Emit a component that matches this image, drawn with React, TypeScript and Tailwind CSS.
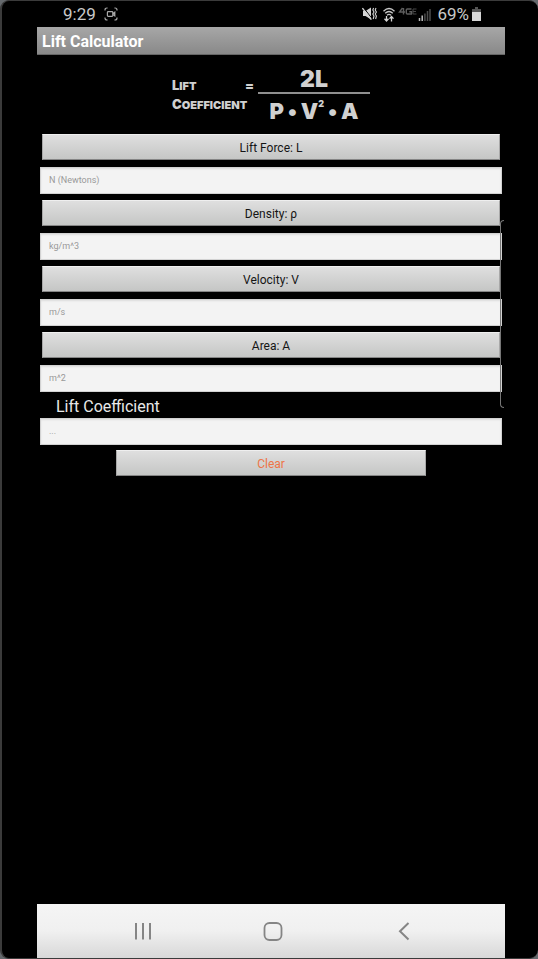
import { useState } from "react";

const fields = [
  { id: "force", label: "Lift Force: L", hint: "N (Newtons)" },
  { id: "density", label: "Density: ρ", hint: "kg/m^3" },
  { id: "velocity", label: "Velocity: V", hint: "m/s" },
  { id: "area", label: "Area: A", hint: "m^2" },
];

const buttonStyle =
  "block h-[26px] border border-t-[#efefef] border-x-[#a8a8a8] border-b-[#858585] bg-linear-to-b from-[#dfdfdf] to-[#c5c6c5] pt-[2px] text-[12px] leading-none";
const inputStyle =
  "block h-[27px] w-full border border-[#d2d2d2] bg-[#f3f3f3] px-2 pb-[2px] text-[9px] leading-none text-[#555] shadow-[inset_0_1px_2px_#dcdcdc] outline-none placeholder:text-[#999]";

function StatusBar() {
  return (
    <div className="flex h-[26px] items-center justify-between pr-[24px] pl-[26px] text-[17px] leading-none text-[#c9c9c9]">
      <div className="flex items-center gap-2">
        <span>9:29</span>
        <svg width="14" height="14" viewBox="0 0 14 14" fill="none" stroke="#a8a8a8" strokeWidth="1.2">
          <path d="M1 3.6V3Q1 1 3 1H3.6M10.4 1H11Q13 1 13 3V3.6M13 10.4V11Q13 13 11 13H10.4M3.6 13H3Q1 13 1 11V10.4" />
          <rect x="3.4" y="4.6" width="5.4" height="4.8" rx="0.8" />
          <path d="M8.8 6.5L10.8 5.2V8.8L8.8 7.5" />
        </svg>
      </div>
      <div className="flex items-center gap-[3px]">
        <svg width="72" height="18" viewBox="3 0 72 18" fill="none">
          <path d="M4 6H6.5L12 2.5V14.5L6.5 11H4Z" fill="#d5d5d5" />
          <path d="M4.4 2.4L13 13.6" stroke="#000" strokeWidth="1" />
          <path d="M3.4 3.2L12.4 14.6" stroke="#d5d5d5" strokeWidth="1.4" />
          <path d="M14.6 3L13.8 5L15 7L13.8 9L15 11L14.2 14M17 3L16.2 5L17.4 7L16.2 9L17.4 11L16.6 14" stroke="#d5d5d5" strokeWidth="1.1" />
          <path d="M24.5 6.2Q30 0.8 35.5 6.2M26.2 8.3Q30 4.8 33.8 8.3M28 10.3Q30 8.4 32 10.3" stroke="#c8c8c8" strokeWidth="1.3" />
          <path d="M27.5 11V16M25.5 13.8L27.5 16L29.5 13.8M32.5 16.5V11.5M30.5 13.6L32.5 11.5L34.5 13.6" stroke="#d5d5d5" strokeWidth="1.3" />
          <path d="M43.5 3L40.5 7H46M44.5 3V9.5M52.5 4H48.3Q47.3 4 47.3 5V8Q47.3 9 48.3 9H52.5V6.8H50.3" stroke="#5d5d5d" strokeWidth="1.4" />
          <path d="M57.5 4H54V9H57.5M54 6.5H57" stroke="#484848" strokeWidth="1" />
          <path d="M60.5 13V16M63.2 10.5V16" stroke="#bdbdbd" strokeWidth="1.5" />
          <path d="M65.9 8.5V16M68.5 6V16M71 4V16" stroke="#4c4c4c" strokeWidth="1.5" />
        </svg>
        <span>69%</span>
        <svg width="9" height="14" viewBox="0 0 9 14">
          <path d="M3 0H6V2H9V14H0V2H3Z" fill="#555" />
          <path d="M0 5H9V14H0Z" fill="#d6d6d6" />
        </svg>
      </div>
    </div>
  );
}

function Formula() {
  return (
    <div className="flex h-[79px] justify-center pt-[11px] font-['Inter','Open_Sans',sans-serif] font-black text-[#d0d0d0]">
      <div className="flex w-[86px] flex-col pt-[10px] text-[13px] leading-[18px]">
        <div className="flex justify-between pr-1">
          <span>
            L<span className="text-[11px]">IFT</span>
          </span>
          <span>=</span>
        </div>
        <span>
          C<span className="text-[11px]">OEFFICIENT</span>
        </span>
      </div>
      <div className="flex w-[112px] flex-col items-center text-[23px] leading-[26px]">
        <div className="h-[28px] w-full border-b-2 border-[#8f8f8f] text-center">2L</div>
        <div className="flex items-start gap-[4px] pt-[4px] text-[22px]">
          <span>P</span>
          <span>•</span>
          <span className="flex">
            V<sup className="top-0 text-[9px] leading-[12px]">2</sup>
          </span>
          <span>•</span>
          <span>A</span>
        </div>
      </div>
    </div>
  );
}

function NavigationBar() {
  return (
    <nav className="flex h-[54px] items-center justify-between bg-linear-to-b from-[#f5f5f5] via-[#f0f0f0] to-[#d8d8d8] pr-[90px] pl-[94px] text-[#858585]">
      <button type="button" aria-label="Recent apps">
        <svg width="22" height="22" viewBox="0 0 22 22" fill="none" stroke="currentColor" strokeWidth="2">
          <path d="M5 3V19.5M12 3V19.5M19 3V19.5" />
        </svg>
      </button>
      <button type="button" aria-label="Home">
        <svg width="22" height="22" viewBox="0 0 22 22" fill="none" stroke="currentColor" strokeWidth="1.8">
          <rect x="2.5" y="3" width="17" height="17" rx="5" />
        </svg>
      </button>
      <button type="button" aria-label="Back">
        <svg width="22" height="22" viewBox="0 0 22 22" fill="none" stroke="currentColor" strokeWidth="2">
          <path d="M15.5 3L7 11.2L15.5 19.5" />
        </svg>
      </button>
    </nav>
  );
}

export default function App() {
  const [values, setValues] = useState<Record<string, string>>({});

  const force = Number(values.force);
  const pressure = Number(values.density) * Number(values.velocity) ** 2 * Number(values.area);
  const result = force && pressure ? String((2 * force) / pressure) : "";

  return (
    <div className="min-h-screen bg-[#65696d] font-['Roboto',sans-serif]">
      <div className="relative flex min-h-screen flex-col rounded-[9px] border-t border-b border-l-2 border-[#3b3b3b] bg-black pr-[33px] pl-[35px]">
        <StatusBar />
        <header className="flex h-[28px] items-center border-b border-[#666] bg-linear-to-b from-[#a7a7a7] to-[#898989] px-[5px] pt-[2px]">
          <h1 className="text-[16px] leading-none font-bold text-white">Lift Calculator</h1>
        </header>
        <main className="flex flex-1 flex-col px-[3px]">
          <Formula />
          <div className="flex flex-col gap-[6px]">
            {fields.map((field) => (
              <div key={field.id} className="flex flex-col gap-[7px]">
                <button type="button" id={field.id + "-label"} className={buttonStyle + " mx-[2px] text-[#151515]"}>
                  {field.label}
                </button>
                <input
                  type="text"
                  aria-labelledby={field.id + "-label"}
                  placeholder={field.hint}
                  value={values[field.id] ?? ""}
                  onChange={(e) => setValues({ ...values, [field.id]: e.target.value })}
                  className={inputStyle}
                />
              </div>
            ))}
          </div>
          <label htmlFor="result" className="flex h-[26px] items-center pt-[4px] pl-4 text-[16px] leading-none text-[#e8e8e8]">
            Lift Coefficient
          </label>
          <input id="result" type="text" readOnly placeholder="..." value={result} className={inputStyle} />
          <button
            type="button"
            onClick={() => setValues({})}
            className={buttonStyle + " mx-auto mt-[5px] w-[67%] text-[#ee7547]"}
          >
            Clear
          </button>
        </main>
        <NavigationBar />
        <div className="absolute top-[219px] right-[34px] h-[188px] w-[4px] rounded-l-[4px] border-y border-l border-[#777]" />
      </div>
    </div>
  );
}
